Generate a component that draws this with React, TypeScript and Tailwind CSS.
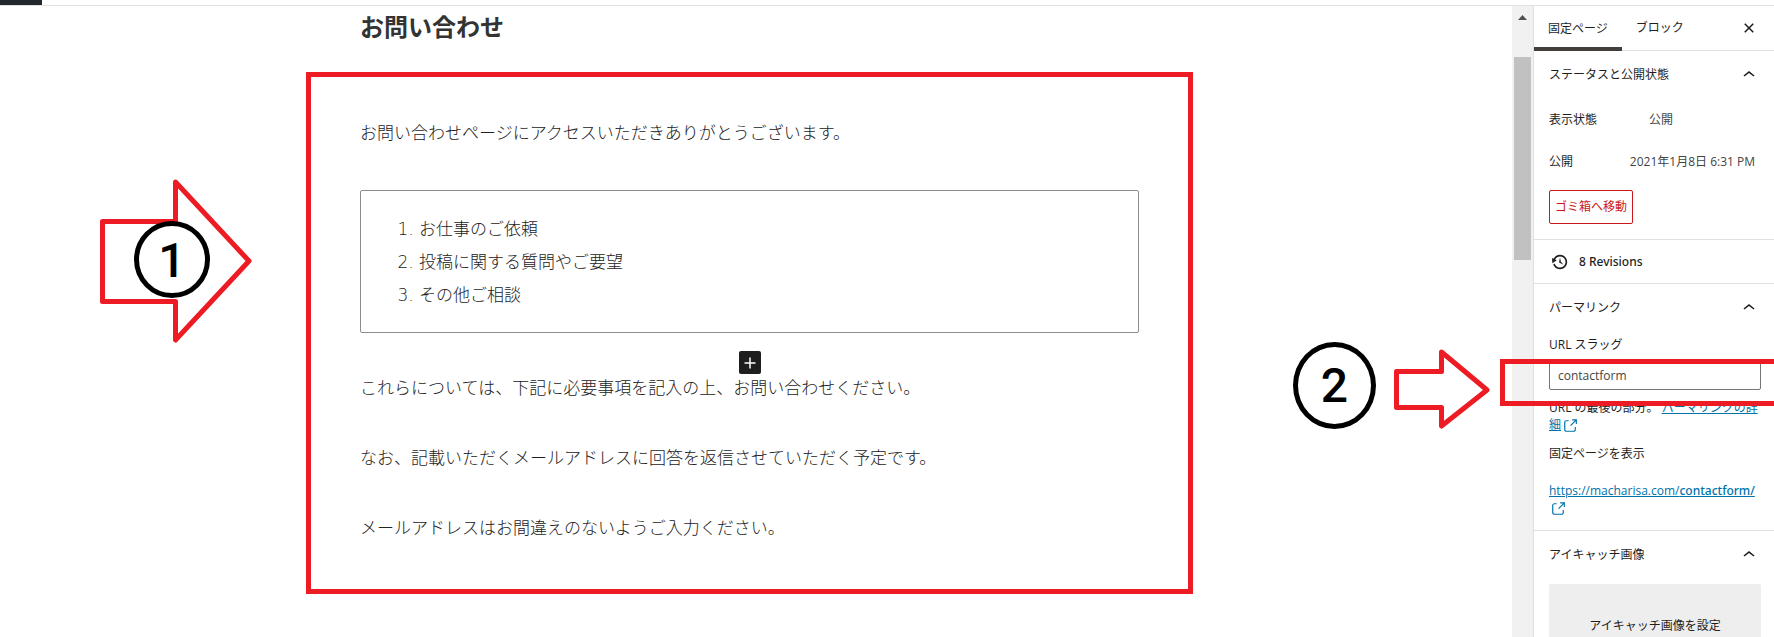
/**
 * Page editor for the contact page: content canvas on the left, document
 * settings on the right, with numbered callouts over the two areas to edit.
 */
import { useState } from 'react';
import type { ReactNode } from 'react';

const TOPICS = ['お仕事のご依頼', '投稿に関する質問やご要望', 'その他ご相談'];

const NOTES = [
  'これらについては、下記に必要事項を記入の上、お問い合わせください。',
  'なお、記載いただくメールアドレスに回答を返信させていただく予定です。',
  'メールアドレスはお間違えのないようご入力ください。',
];

function ChevronUp() {
  return (
    <svg viewBox="0 0 24 24" className="h-6 w-6 shrink-0 fill-current" aria-hidden="true">
      <path d="M6.5 12.4L12 8l5.5 4.4-.9 1.2L12 10l-4.5 3.6-1-1.2z" />
    </svg>
  );
}

function CloseIcon() {
  return (
    <svg viewBox="0 0 24 24" className="h-6 w-6 fill-current" aria-hidden="true">
      <path d="M12 13.06l3.712 3.713 1.061-1.06L13.061 12l3.712-3.712-1.06-1.06L12 10.938 8.288 7.227l-1.061 1.06L10.939 12l-3.712 3.712 1.06 1.061L12 13.061z" />
    </svg>
  );
}

function BackupIcon() {
  return (
    <svg viewBox="0 0 20 20" className="h-[18px] w-[18px] fill-current" aria-hidden="true">
      <path d="M13.65 2.88c3.93 2.01 5.48 6.84 3.47 10.77s-6.83 5.48-10.77 3.47c-1.87-.96-3.2-2.56-3.86-4.4l1.64-1.03c.45 1.57 1.52 2.95 3.08 3.76 3.01 1.54 6.69.35 8.23-2.66 1.55-3.01.36-6.69-2.65-8.24C9.78 3.01 6.1 4.2 4.56 7.21l1.88.97-4.95 3.08-.39-5.82 1.78.91C4.9 2.4 9.75.89 13.65 2.88zm-4.36 7.83C9.11 10.53 9 10.28 9 10c0-.07.03-.12.04-.19h-.01L10 5l.97 4.81L14 13l-4.5-2.12.02-.02c-.08-.04-.16-.09-.23-.15z" />
    </svg>
  );
}

function ExternalIcon() {
  return (
    <svg viewBox="0 0 24 24" className="-my-1 inline-block h-[18px] w-[18px] fill-current align-middle" aria-hidden="true">
      <path d="M18.2 17c0 .7-.6 1.2-1.2 1.2H7c-.7 0-1.2-.6-1.2-1.2V7c0-.7.6-1.2 1.2-1.2h3.2V4.2H7C5.5 4.2 4.2 5.5 4.2 7v10c0 1.5 1.2 2.8 2.8 2.8h10c1.5 0 2.8-1.2 2.8-2.8v-3.6h-1.5V17zM14.9 3v1.5h3.7l-6.4 6.4 1.1 1.1 6.4-6.4v3.7h1.5V3h-6.3z" />
    </svg>
  );
}

function Panel({ title, children }: { title: string; children: ReactNode }) {
  const [open, setOpen] = useState(true);

  return (
    <section className="border-b border-[#e0e0e0] pr-[13px] pl-[15px]">
      <h2>
        <button
          type="button"
          aria-expanded={open}
          onClick={() => setOpen(!open)}
          className="flex h-12 w-full items-center justify-between"
        >
          {title}
          <ChevronUp />
        </button>
      </h2>
      {open && children}
    </section>
  );
}

/** First callout: wide arrow with the numbered circle inside it */
function ContentCallout() {
  return (
    <div className="absolute top-[100px] right-full mr-[57px] h-[168px] w-[154px]">
      <svg viewBox="0 0 154 168" className="h-full w-full fill-none" aria-hidden="true">
        <path
          d="M2.5 44.5H75.5V5L149 84L75.5 163V124.5H2.5Z"
          className="stroke-[#ed1c24] stroke-5"
          strokeLinejoin="round"
        />
        <ellipse cx="72" cy="82.5" rx="35.5" ry="36" className="fill-white stroke-black stroke-5" />
      </svg>
      <span className="absolute top-[46px] left-[34px] flex h-[76px] w-[76px] items-center justify-center font-['Roboto',sans-serif] text-5xl font-medium text-black">
        1
      </span>
    </div>
  );
}

/** Second callout: circle followed by a smaller arrow */
function SlugCallout() {
  return (
    <div className="pointer-events-none absolute -top-[1px] -right-[20px] -left-[49px] h-[47px] border-5 border-[#ed1c24]">
      <div className="absolute -top-[22px] right-full mr-3 flex w-[200px] items-start gap-[18px]">
        <div className="flex h-[87px] w-[83px] shrink-0 items-center justify-center rounded-[50%] border-5 border-black bg-white font-['Roboto',sans-serif] text-5xl font-medium text-black">
          2
        </div>
        <svg viewBox="0 0 96 80" className="mt-[7px] h-20 w-24 shrink-0 fill-none" aria-hidden="true">
          <path
            d="M2.5 22.5H47.5V3L93 41L47.5 77V58.5H2.5Z"
            className="stroke-[#ed1c24] stroke-5"
            strokeLinejoin="round"
          />
        </svg>
      </div>
    </div>
  );
}

function Canvas() {
  return (
    <main className="min-w-0 flex-1 pr-[13px] font-['Noto_Sans','Noto_Sans_CJK_JP',sans-serif] text-[17px] font-light text-[#222]">
      <div className="mx-auto max-w-[887px]">
        <h1 className="px-[54px] pt-[3px] text-2xl leading-9 font-bold text-[#333]">お問い合わせ</h1>

        <div className="relative mt-[27px] border-5 border-[#ed1c24] px-[49px] pt-10 pb-[47px]">
          <ContentCallout />
          <p className="leading-8">お問い合わせページにアクセスいただきありがとうございます。</p>

          <ol className="mt-[41px] list-decimal rounded-xs border border-[#8c8c8c] py-[21px] pl-[58px] leading-[33px] marker:font-['DejaVu_Sans']">
            {TOPICS.map((topic) => (
              <li key={topic}>{topic}</li>
            ))}
          </ol>

          {/* Block inserter between the list and the notes */}
          <div className="flex h-[41px] items-end justify-center">
            <button
              type="button"
              aria-label="ブロックを追加"
              className="flex h-[23px] w-[22px] items-center justify-center rounded-xs bg-[#1e1e1e] text-white"
            >
              <svg viewBox="0 0 12 12" className="h-3 w-3 fill-none stroke-current" aria-hidden="true">
                <path d="M6 0.5V11.5M0.5 6H11.5" strokeWidth="1.5" />
              </svg>
            </button>
          </div>

          <div className="flex flex-col gap-[42px]">
            {NOTES.map((note) => (
              <p key={note} className="leading-7">{note}</p>
            ))}
          </div>
        </div>
      </div>
    </main>
  );
}

function Scrollbar() {
  return (
    <div className="w-[21px] shrink-0 bg-[#f1f1f1] px-[2px] pt-[9px]">
      <svg viewBox="0 0 9 5" className="mx-auto h-[5px] w-[9px] fill-[#505050]" aria-hidden="true">
        <path d="M4.5 0L9 5H0Z" />
      </svg>
      <div className="mt-[37px] h-[203px] w-[17px] bg-[#c1c1c1]" />
    </div>
  );
}

function Sidebar() {
  const [slug, setSlug] = useState('contactform');

  return (
    <aside className="w-[241px] shrink-0 border-l border-[#e0e0e0] font-['Open_Sans','Noto_Sans_CJK_JP',sans-serif] text-xs text-[#1e1e1e]">
      <div className="flex h-[45px] items-stretch border-b border-[#e0e0e0] pr-[13px]">
        <button type="button" className="-mb-px border-b-4 border-[#433f3a] px-[14px] pt-1">固定ページ</button>
        <button type="button" className="px-[14px]">ブロック</button>
        <button type="button" aria-label="設定を閉じる" className="ml-auto"><CloseIcon /></button>
      </div>

      <Panel title="ステータスと公開状態">
        <dl className="flex flex-col gap-[6px] pt-[3px]">
          <div className="flex h-9 items-center">
            <dt className="w-[100px]">表示状態</dt>
            <dd className="text-[#444]">公開</dd>
          </div>
          <div className="flex h-9 items-center justify-between pr-[6px]">
            <dt>公開</dt>
            <dd className="text-[#444]">2021年1月8日 6:31 PM</dd>
          </div>
        </dl>
        <button
          type="button"
          className="mt-[10px] mb-[15px] h-[34px] rounded-xs border border-[#cc1818] px-[5px] text-[#cc1818]"
        >
          ゴミ箱へ移動
        </button>
      </Panel>

      <button
        type="button"
        className="flex h-11 w-full items-center gap-[10px] border-b border-[#e0e0e0] pl-[17px] font-['Noto_Sans',sans-serif] font-medium"
      >
        <BackupIcon />
        8 Revisions
      </button>

      <Panel title="パーマリンク">
        <label htmlFor="slug" className="block pt-[3px] leading-5">URL スラッグ</label>
        <div className="relative mt-[5px]">
          <input
            id="slug"
            value={slug}
            onChange={(e) => setSlug(e.target.value)}
            className="block h-[30px] w-full rounded-xs border border-[#757575] px-2 text-[#444]"
          />
          <SlugCallout />
        </div>
        <p className="mt-[9px] leading-[17px]">
          URL の最後の部分。{' '}
          <a href="#permalink" className="text-[#0073aa]">
            <span className="underline">パーマリンクの詳細</span>
            <ExternalIcon />
          </a>
        </p>
        <h3 className="mt-[11px] leading-5">固定ページを表示</h3>
        <p className="mt-[18px] pb-[14px] leading-[17px]">
          <a href="#view" className="text-[#0073aa]">
            <span className="underline">
              https://macharisa.com/<span className="font-['Noto_Sans',sans-serif] font-medium">{slug}/</span>
            </span>{' '}
            <ExternalIcon />
          </a>
        </p>
      </Panel>

      <Panel title="アイキャッチ画像">
        <button type="button" className="mt-[5px] h-[84px] w-full rounded-xs bg-[#eee]">
          アイキャッチ画像を設定
        </button>
      </Panel>
    </aside>
  );
}

export default function App() {
  return (
    <div className="flex h-screen flex-col overflow-hidden bg-white">
      <header className="h-[6px] shrink-0 border-b border-[#e0e0e0]">
        <div className="h-[5px] w-[42px] bg-[#23282d]" />
      </header>
      <div className="flex min-h-0 flex-1">
        <Canvas />
        <Scrollbar />
        <Sidebar />
      </div>
    </div>
  );
}
